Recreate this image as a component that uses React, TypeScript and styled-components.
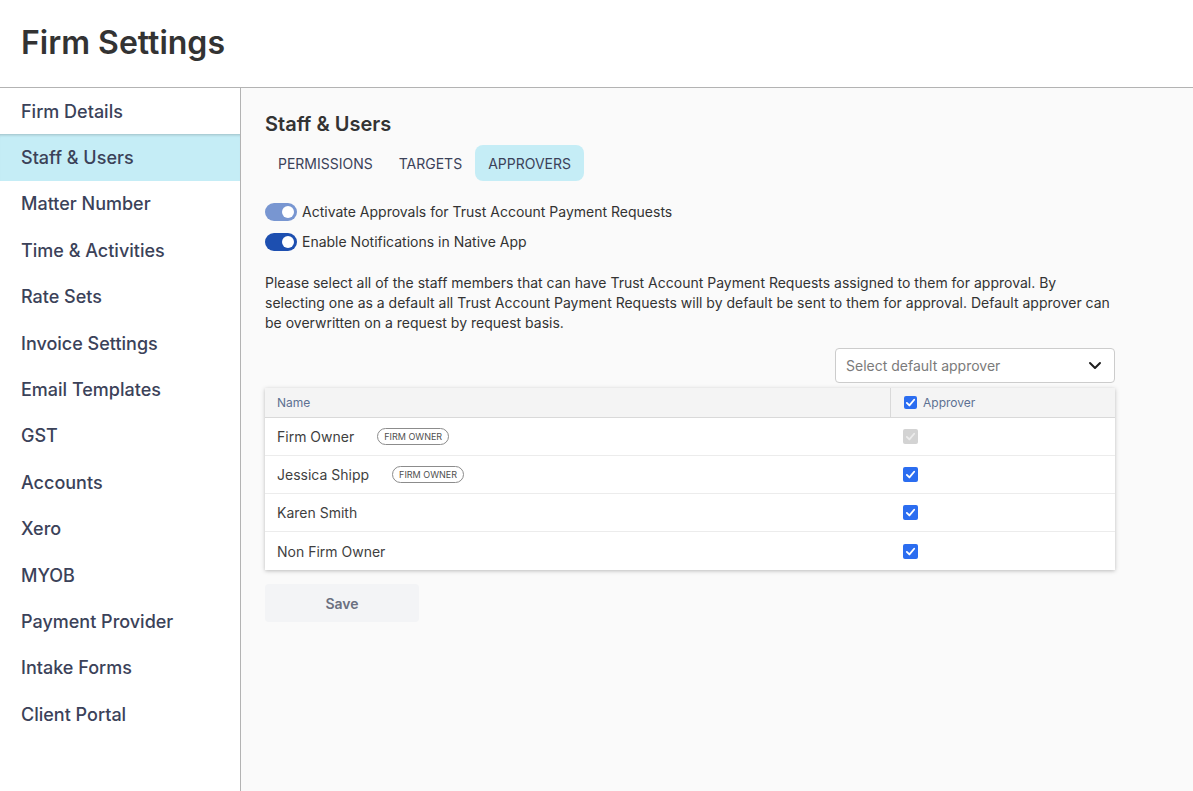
import styled, { createGlobalStyle } from 'styled-components'

const GlobalStyle = createGlobalStyle`
  html, body, #root {
    height: 100%;
  }
  body {
    margin: 0;
    background: #fff;
    font-family: Inter, "Liberation Sans", sans-serif;
    color: #333;
  }
  * {
    box-sizing: border-box;
  }
`

const Page = styled.div`
  height: 791px;
  display: flex;
  flex-direction: column;
  overflow: hidden;
`

const Header = styled.header`
  height: 88px;
  flex: none;
  display: flex;
  align-items: center;
  padding: 0 21px 2px;
  border-bottom: 1px solid #b3b3b3;
`

const Title = styled.h1`
  margin: 0;
  font-size: 32px;
  font-weight: 600;
  color: #333;
`

const Body = styled.div`
  flex: 1;
  display: flex;
  min-height: 0;
`

const Sidebar = styled.nav`
  width: 241px;
  flex: none;
  border-right: 1px solid #b3b3b3;
`

const NavItem = styled.div<{ $active?: boolean }>`
  height: 46.4px;
  display: flex;
  align-items: center;
  padding-left: 21px;
  font-size: 18px;
  font-weight: 500;
  color: #3b4259;
  background: ${p => (p.$active ? '#c5edf6' : 'transparent')};
  box-shadow: ${p => (p.$active ? 'inset 0 3px 3px -2px rgba(0, 0, 0, 0.2)' : 'none')};
`

const Content = styled.main`
  flex: 1;
  background: #fafafa;
  padding: 22px 24px 0;
`

const Inner = styled.div`
  width: 850px;
`

const Heading = styled.h2`
  margin: 0;
  font-size: 20px;
  line-height: 28px;
  font-weight: 600;
  color: #333;
`

const Tabs = styled.div`
  display: flex;
  margin-top: 7px;
`

const Tab = styled.div<{ $active?: boolean }>`
  height: 36px;
  display: flex;
  align-items: center;
  padding: 0 13px;
  font-size: 14px;
  color: #3b4259;
  border-radius: 8px;
  background: ${p => (p.$active ? '#c5edf6' : 'transparent')};
`

const ToggleList = styled.div`
  display: flex;
  flex-direction: column;
  gap: 12px;
  margin-top: 22px;
`

const ToggleRow = styled.div`
  display: flex;
  align-items: center;
  gap: 5px;
  font-size: 14px;
  line-height: 18px;
  color: #333;
`

const Toggle = styled.span<{ $muted?: boolean }>`
  width: 32px;
  height: 18px;
  border-radius: 9px;
  background: ${p => (p.$muted ? '#7896d1' : '#1d4fb0')};
  display: flex;
  align-items: center;
  justify-content: flex-end;
  padding-right: 3px;

  &::after {
    content: '';
    width: 12px;
    height: 12px;
    border-radius: 50%;
    background: #fff;
  }
`

const Description = styled.p`
  margin: 22px 0 0;
  font-size: 14px;
  line-height: 20px;
  color: #333;
`

const SelectRow = styled.div`
  display: flex;
  justify-content: flex-end;
  margin-top: 15px;
`

const Select = styled.div`
  width: 280px;
  height: 35px;
  display: flex;
  align-items: center;
  justify-content: space-between;
  padding: 0 12px 0 10px;
  background: #fff;
  border: 1px solid #ccc;
  border-radius: 4px;
  font-size: 14px;
  color: #7b7b7b;
`

const Table = styled.div`
  margin-top: 5px;
  background: #fff;
  box-shadow: 0 1px 4px rgba(0, 0, 0, 0.25);
`

const Row = styled.div<{ $head?: boolean }>`
  display: grid;
  grid-template-columns: 625px 1fr;
  height: ${p => (p.$head ? '30px' : '38px')};
  background: ${p => (p.$head ? '#f4f4f4' : '#fff')};
  border-bottom: 1px solid ${p => (p.$head ? '#d9d9d9' : '#ececec')};

  &:last-child {
    border-bottom: none;
  }
`

const NameCell = styled.div<{ $head?: boolean }>`
  display: flex;
  align-items: center;
  gap: 23px;
  padding-left: 12px;
  font-size: ${p => (p.$head ? '12px' : '14px')};
  color: ${p => (p.$head ? '#5d7192' : '#3f3f3f')};
`

const CheckCell = styled.div<{ $head?: boolean }>`
  display: flex;
  align-items: center;
  gap: 6px;
  padding-left: 12px;
  font-size: 12px;
  color: #5d7192;
  border-left: ${p => (p.$head ? '1px solid #d9d9d9' : 'none')};
  margin-left: ${p => (p.$head ? '0' : '1px')};
`

const Badge = styled.span`
  height: 17px;
  display: inline-flex;
  align-items: center;
  padding: 0 6px;
  border: 1px solid #8c8c8c;
  border-radius: 9px;
  font-size: 9px;
  color: #4f4f4f;
`

const Checkbox = styled.span<{ $disabled?: boolean; $small?: boolean }>`
  width: ${p => (p.$small ? '13px' : '15px')};
  height: ${p => (p.$small ? '13px' : '15px')};
  margin-left: ${p => (p.$small ? '1px' : '0')};
  border-radius: 2px;
  display: flex;
  align-items: center;
  justify-content: center;
  background: ${p => (p.$disabled ? '#d3d3d3' : '#2b6df0')};
`

const SaveButton = styled.button`
  display: block;
  width: 154px;
  height: 38px;
  margin-top: 14px;
  border: none;
  border-radius: 4px;
  background: #f3f4f6;
  font-family: inherit;
  font-size: 14px;
  font-weight: 600;
  color: #6b7080;
`

const CheckMark = ({ color = '#fff' }: { color?: string }) => (
  <svg width="11" height="11" viewBox="0 0 12 12" fill="none">
    <path d="M2 6.4 4.8 9.2 10 3" stroke={color} strokeWidth="2" strokeLinecap="round" strokeLinejoin="round" />
  </svg>
)

const Chevron = () => (
  <svg width="14" height="9" viewBox="0 0 14 9" fill="none">
    <path d="M2 2l5 5 5-5" stroke="#1f1f1f" strokeWidth="2" strokeLinecap="round" strokeLinejoin="round" />
  </svg>
)

const navItems = [
  'Firm Details',
  'Staff & Users',
  'Matter Number',
  'Time & Activities',
  'Rate Sets',
  'Invoice Settings',
  'Email Templates',
  'GST',
  'Accounts',
  'Xero',
  'MYOB',
  'Payment Provider',
  'Intake Forms',
  'Client Portal',
]

const staff = [
  { name: 'Firm Owner', owner: true, locked: true },
  { name: 'Jessica Shipp', owner: true },
  { name: 'Karen Smith' },
  { name: 'Non Firm Owner' },
]

export default function App() {
  return (
    <Page>
      <GlobalStyle />
      <Header>
        <Title>Firm Settings</Title>
      </Header>
      <Body>
        <Sidebar>
          {navItems.map(item => (
            <NavItem key={item} $active={item === 'Staff & Users'}>
              {item}
            </NavItem>
          ))}
        </Sidebar>
        <Content>
          <Inner>
            <Heading>Staff &amp; Users</Heading>
            <Tabs>
              <Tab>PERMISSIONS</Tab>
              <Tab>TARGETS</Tab>
              <Tab $active>APPROVERS</Tab>
            </Tabs>
            <ToggleList>
              <ToggleRow>
                <Toggle $muted />
                Activate Approvals for Trust Account Payment Requests
              </ToggleRow>
              <ToggleRow>
                <Toggle />
                Enable Notifications in Native App
              </ToggleRow>
            </ToggleList>
            <Description>
              Please select all of the staff members that can have Trust Account Payment Requests assigned to them for
              approval. By selecting one as a default all Trust Account Payment Requests will by default be sent to them
              for approval. Default approver can be overwritten on a request by request basis.
            </Description>
            <SelectRow>
              <Select>
                Select default approver
                <Chevron />
              </Select>
            </SelectRow>
            <Table>
              <Row $head>
                <NameCell $head>Name</NameCell>
                <CheckCell $head>
                  <Checkbox $small>
                    <CheckMark />
                  </Checkbox>
                  Approver
                </CheckCell>
              </Row>
              {staff.map(person => (
                <Row key={person.name}>
                  <NameCell>
                    {person.name}
                    {person.owner ? <Badge>FIRM OWNER</Badge> : null}
                  </NameCell>
                  <CheckCell>
                    <Checkbox $disabled={person.locked}>
                      <CheckMark color={person.locked ? '#ececec' : '#fff'} />
                    </Checkbox>
                  </CheckCell>
                </Row>
              ))}
            </Table>
            <SaveButton>Save</SaveButton>
          </Inner>
        </Content>
      </Body>
    </Page>
  )
}
